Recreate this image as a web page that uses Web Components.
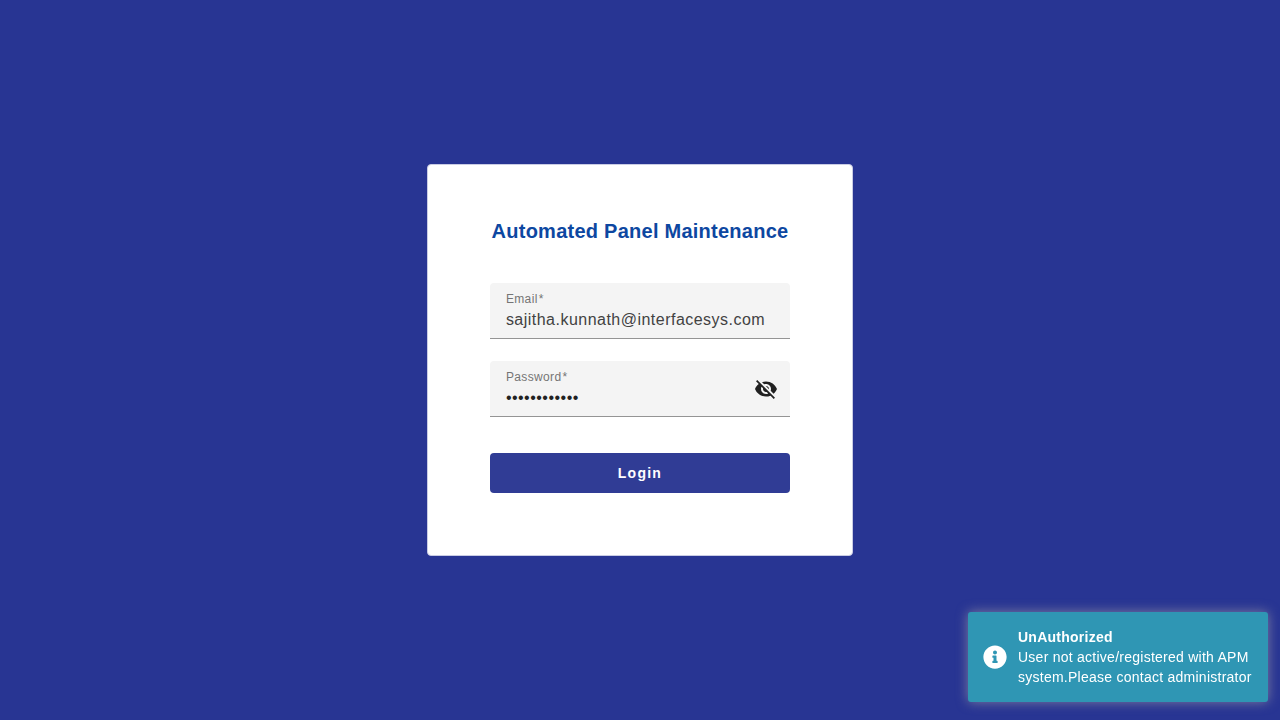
<!DOCTYPE html>
<html lang="en">
<head>
<meta charset="utf-8">
<meta name="viewport" content="width=device-width, initial-scale=1">
<title>Automated Panel Maintenance</title>
<style>
  body { margin: 0; background: #283593; font-family: "Liberation Sans", Arial, sans-serif; }
</style>
</head>
<body>
<apm-app></apm-app>

<template id="app-template">
  <style>
    :host { display: grid; place-items: center; min-height: 100vh; background: #283593; }
    .toasts { position: fixed; right: 12px; bottom: 18px; }
  </style>
  <apm-login-card heading="Automated Panel Maintenance"></apm-login-card>
  <div class="toasts">
    <apm-toast>
      <span slot="title">UnAuthorized</span>
      User not active/registered with APM system.Please contact administrator
    </apm-toast>
  </div>
</template>

<template id="card-template">
  <style>
    :host {
      display: block; box-sizing: border-box; width: 33.3%; min-width: 360px;
      padding: 52px 62px 62px; border: 1px solid #c9cce4; border-radius: 4px; background: #fff;
    }
    h1 {
      margin: 0 0 38px; text-align: center; white-space: nowrap;
      font-size: 20px; line-height: 28px; font-weight: 700; letter-spacing: 0.0125em; color: #0d47a1;
    }
    form { display: grid; }
    apm-field + apm-field { margin-top: 22px; }
    button {
      height: 40px; margin-top: 36px; padding: 0 16px; border: 0; border-radius: 4px;
      background: #303c95; color: #fff; font: 700 14px/20px "Liberation Sans", Arial, sans-serif;
      letter-spacing: 0.09em; cursor: pointer;
    }
  </style>
  <h1></h1>
  <form>
    <apm-field label="Email" type="email" value="sajitha.kunnath@interfacesys.com"></apm-field>
    <apm-field label="Password" type="password" value="panelaccess1"><apm-visibility slot="suffix"></apm-visibility></apm-field>
    <button type="button">Login</button>
  </form>
</template>

<template id="field-template">
  <style>
    :host {
      display: flex; align-items: flex-start; box-sizing: border-box; height: 56px; padding: 0 0 0 16px;
      background: #f4f4f4; border-bottom: 1px solid #949494; border-radius: 4px 4px 0 0;
    }
    .text { flex: 1; min-width: 0; display: flex; flex-direction: column; padding-top: 8px; }
    label { font-size: 12px; line-height: 16px; letter-spacing: 0.03em; color: #747474; }
    .required { margin-left: 1px; }
    input {
      width: 100%; height: 26px; padding: 0; border: 0; outline: 0; background: none;
      font: 16px/26px "Liberation Sans", Arial, sans-serif; letter-spacing: 0.03em; color: #424242;
    }
    input[type="password"] { color: #212121; }
  </style>
  <div class="text"><label for="input"><span class="name"></span><span class="required">*</span></label><input id="input" required></div>
  <slot name="suffix"></slot>
</template>

<template id="visibility-template">
  <style>
    :host { display: block; padding-top: 4px; }
    button { display: grid; place-items: center; width: 48px; height: 48px; padding: 0; border: 0; background: none; color: #212121; cursor: pointer; }
    svg { width: 24px; height: 24px; fill: currentColor; }
  </style>
  <button type="button" aria-label="Show password">
    <svg viewBox="0 0 24 24" aria-hidden="true"><path d="M12 7c2.76 0 5 2.24 5 5 0 .65-.13 1.26-.36 1.83l2.92 2.92c1.51-1.26 2.7-2.89 3.43-4.75-1.73-4.39-6-7.5-11-7.5-1.4 0-2.74.25-3.98.7l2.16 2.16C10.74 7.13 11.35 7 12 7zM2 4.27l2.28 2.28.46.46C3.08 8.3 1.78 10.02 1 12c1.73 4.39 6 7.5 11 7.5 1.55 0 3.03-.3 4.38-.84l.42.42L19.73 22 21 20.73 3.27 3 2 4.27zM7.53 9.8l1.55 1.55c-.05.21-.08.43-.08.65 0 1.66 1.34 3 3 3 .22 0 .44-.03.65-.08l1.55 1.55c-.67.33-1.41.53-2.2.53-2.76 0-5-2.24-5-5 0-.79.2-1.53.53-2.2zm4.31-.78l3.15 3.15.02-.16c0-1.66-1.34-3-3-3l-.17.01z"/></svg>
  </button>
</template>

<template id="toast-template">
  <style>
    :host {
      display: flex; align-items: center; gap: 11px; box-sizing: border-box; width: 300px;
      padding: 15px; border-radius: 3px; background: #2f96b4; color: #fff;
      box-shadow: 0 0 12px #7d7d9f; font-size: 14px; line-height: 20px; letter-spacing: 0.018em;
    }
    svg { flex: none; width: 24px; height: 24px; fill: currentColor; }
    .title { font-weight: 700; }
    .message { margin-right: -4px; }
  </style>
  <svg viewBox="0 0 512 512" aria-hidden="true"><path d="M256 8C119.043 8 8 119.083 8 256c0 136.997 111.043 248 248 248s248-111.003 248-248C504 119.083 392.957 8 256 8zm0 110c23.196 0 42 18.804 42 42s-18.804 42-42 42-42-18.804-42-42 18.804-42 42-42zm56 254c0 6.627-5.373 12-12 12h-88c-6.627 0-12-5.373-12-12v-24c0-6.627 5.373-12 12-12h12v-64h-12c-6.627 0-12-5.373-12-12v-24c0-6.627 5.373-12 12-12h64c6.627 0 12 5.373 12 12v100h12c6.627 0 12 5.373 12 12v24z"/></svg>
  <div role="alert">
    <div class="title"><slot name="title"></slot></div>
    <div class="message"><slot></slot></div>
  </div>
</template>

<script>
  class TemplateElement extends HTMLElement {
    constructor() {
      super();
      const template = document.getElementById(this.constructor.templateId);
      this.attachShadow({ mode: "open" }).append(document.importNode(template.content, true));
    }
  }

  class ApmField extends TemplateElement {
    static templateId = "field-template";
    connectedCallback() {
      const input = this.shadowRoot.querySelector("input");
      this.shadowRoot.querySelector(".name").textContent = this.getAttribute("label");
      input.type = this.getAttribute("type");
      input.value = this.getAttribute("value");
    }
    toggle() {
      const input = this.shadowRoot.querySelector("input");
      input.type = input.type === "password" ? "text" : "password";
    }
  }

  class ApmVisibility extends TemplateElement {
    static templateId = "visibility-template";
    connectedCallback() {
      this.shadowRoot.querySelector("button").onclick = () => this.closest("apm-field").toggle();
    }
  }

  class ApmLoginCard extends TemplateElement {
    static templateId = "card-template";
    connectedCallback() {
      this.shadowRoot.querySelector("h1").textContent = this.getAttribute("heading");
    }
  }

  class ApmToast extends TemplateElement { static templateId = "toast-template"; }
  class ApmApp extends TemplateElement { static templateId = "app-template"; }

  customElements.define("apm-field", ApmField);
  customElements.define("apm-visibility", ApmVisibility);
  customElements.define("apm-login-card", ApmLoginCard);
  customElements.define("apm-toast", ApmToast);
  customElements.define("apm-app", ApmApp);
</script>
</body>
</html>
